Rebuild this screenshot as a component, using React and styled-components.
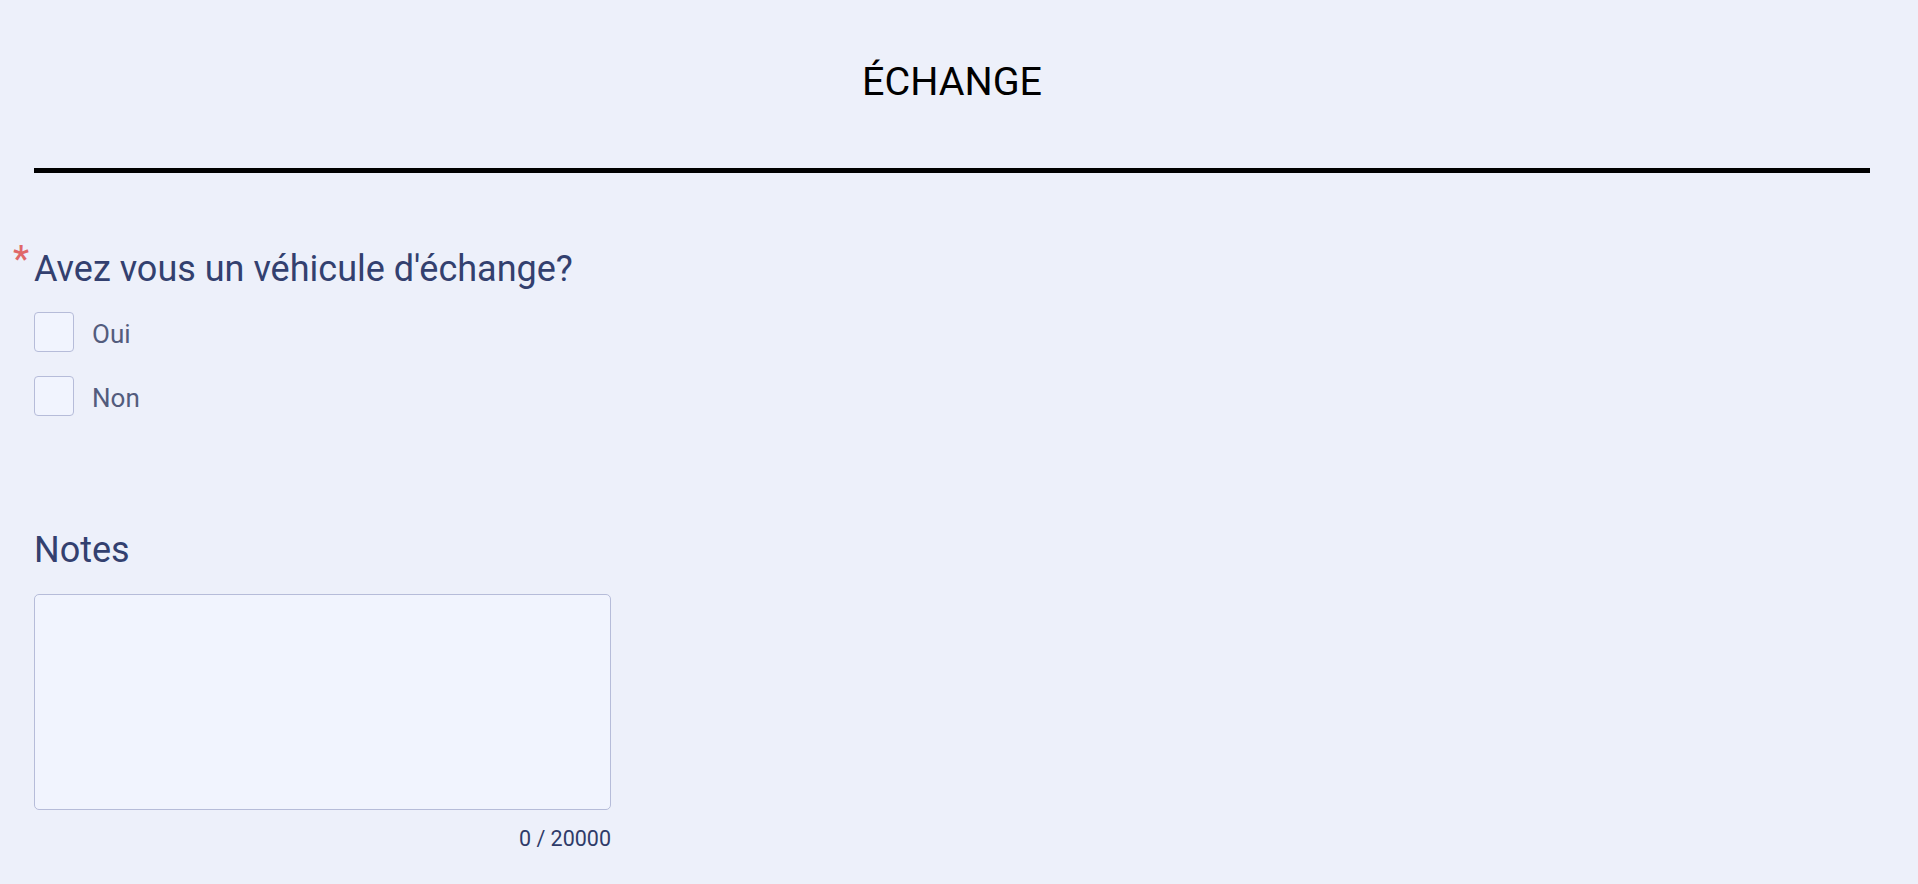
import React, { useState } from "react";
import styled, { createGlobalStyle } from "styled-components";

const GlobalStyle = createGlobalStyle`
  html, body {
    margin: 0;
    padding: 0;
    background: #edf0fa;
  }
  body {
    font-family: Roboto, "Noto Sans", "Liberation Sans", sans-serif;
  }
`;

const Page = styled.div`
  min-height: 884px;
  box-sizing: border-box;
  padding: 58px 48px 0 34px;
  background: #edf0fa;
`;

const Header = styled.header`
  display: flex;
  flex-direction: column;
`;

const SectionTitle = styled.h1`
  margin: 0;
  text-align: center;
  font-size: 39.5px;
  line-height: 48px;
  font-weight: 400;
  color: #000;
`;

const Divider = styled.div`
  margin-top: 62px;
  height: 5px;
  background: #000;
`;

const Field = styled.section`
  display: flex;
  flex-direction: column;
  margin-top: ${(p) => p.$top}px;
`;

const Question = styled.h2`
  position: relative;
  margin: 0;
  font-size: 36px;
  line-height: 42px;
  font-weight: 400;
  color: #33406f;
`;

const Required = styled.span`
  position: absolute;
  left: -21px;
  top: -7px;
  font-size: 36px;
  line-height: 36px;
  font-weight: 500;
  color: #e06868;
`;

const Options = styled.div`
  display: flex;
  flex-direction: column;
  gap: 24px;
  margin-top: 22px;
`;

const Option = styled.label`
  display: flex;
  align-items: center;
  gap: 18px;
  height: 40px;
  cursor: pointer;
`;

const Box = styled.span`
  box-sizing: border-box;
  width: 40px;
  height: 40px;
  border: 1px solid #b6bcd9;
  border-radius: 4px;
  background: ${(p) => (p.$checked ? "#33406f" : "#f1f4fe")};
`;

const OptionText = styled.span`
  font-size: 26px;
  line-height: 34px;
  padding-top: 4px;
  color: #535c7d;
`;

const NotesArea = styled.textarea`
  box-sizing: border-box;
  display: block;
  margin-top: 23px;
  width: 577px;
  height: 216px;
  border: 1px solid #b6bcd9;
  border-radius: 5px;
  background: #f1f4fe;
  resize: none;
  outline: none;
  padding: 10px 12px;
  font-family: inherit;
  font-size: 20px;
  color: #33406f;
`;

const Counter = styled.div`
  width: 577px;
  margin-top: 17px;
  text-align: right;
  font-size: 21.5px;
  line-height: 24px;
  color: #2f3b69;
`;

export default function App() {
  const [choice, setChoice] = useState(null);
  const [notes, setNotes] = useState("");
  const options = ["Oui", "Non"];

  return (
    <>
      <GlobalStyle />
      <Page>
        <Header>
          <SectionTitle>ÉCHANGE</SectionTitle>
          <Divider />
        </Header>

        <Field $top={75}>
          <Question>
            <Required>*</Required>
            Avez vous un véhicule d'échange?
          </Question>
          <Options>
            {options.map((o) => (
              <Option key={o} onClick={() => setChoice(o)}>
                <Box $checked={choice === o} />
                <OptionText>{o}</OptionText>
              </Option>
            ))}
          </Options>
        </Field>

        <Field $top={113}>
          <Question>Notes</Question>
          <NotesArea value={notes} maxLength={20000} onChange={(e) => setNotes(e.target.value)} />
          <Counter>{notes.length} / 20000</Counter>
        </Field>
      </Page>
    </>
  );
}
